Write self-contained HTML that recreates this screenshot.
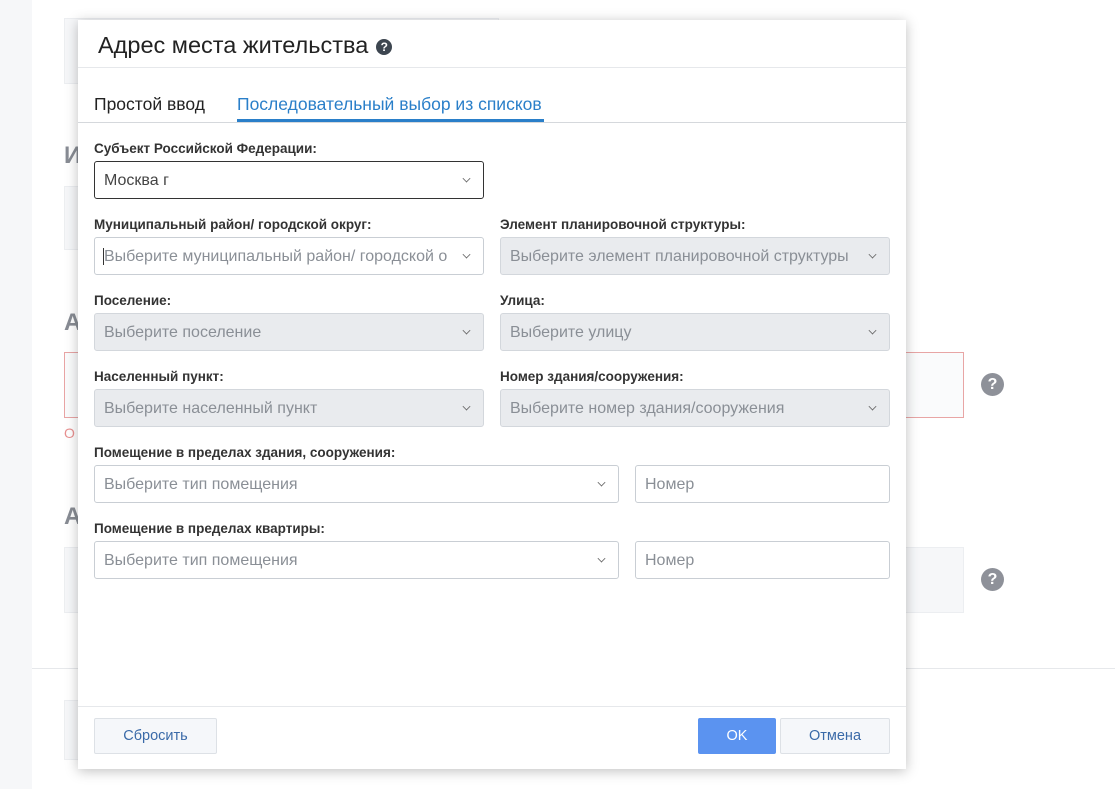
<!DOCTYPE html>
<html><head><meta charset="utf-8">
<style>
*{box-sizing:border-box;margin:0;padding:0}
body{width:1115px;height:789px;overflow:hidden;background:#fff;font-family:"Liberation Sans","DejaVu Sans",sans-serif;position:relative;color:#333}
.abs{position:absolute}
.strip{left:0;top:0;width:32px;height:789px;background:#f6f7f9}
.bgbox{background:#f6f7f9;border:1px solid #eceef1}
.bgh{font-size:24px;font-weight:bold;color:#888c94}
.q{width:23px;height:23px;border-radius:50%;background:#8e9199;color:#fff;font-weight:bold;font-size:16px;text-align:center;line-height:23px}
.modal{left:78px;top:20px;width:828px;height:749px;background:#fff;box-shadow:0 2px 12px rgba(0,0,0,.25)}
.title{left:20px;top:12px;font-size:23.5px;color:#222}
.ti{display:inline-block;width:16px;height:16px;border-radius:50%;background:#3d4650;color:#fff;font-size:12px;font-weight:bold;text-align:center;line-height:16px;vertical-align:2px;margin-left:8px}
.hline{left:0;width:828px;height:1px;background:#e6e8eb}
.tab{font-size:17.5px;top:73px}
.lbl{font-size:13.5px;font-weight:bold;color:#333}
.f{height:38px;border:1px solid #c9ced4;border-radius:3px;font-size:16px;color:#8a8f96;padding:0 0 0 9px;line-height:38px;background:#fff}
.f.d{background:#e9ebee;border-color:#d3d7dc}
.f .ch{position:absolute;right:13px;top:13px;width:7px;height:7px;border-right:1.3px solid #666;border-bottom:1.3px solid #666;transform:rotate(45deg) scale(.8)}
.btn{height:36px;border:1px solid #dde1e6;background:#f5f7fa;color:#3a6aa8;font-size:14.5px;text-align:center;line-height:35px;border-radius:2px}
</style></head><body>
<div class="abs strip"></div>
<div class="abs bgbox" style="left:64px;top:18px;width:435px;height:66px"></div>
<div class="abs bgh" style="left:64px;top:142px">И</div>
<div class="abs bgbox" style="left:64px;top:186px;width:435px;height:64px"></div>
<div class="abs bgh" style="left:64px;top:309px">А</div>
<div class="abs" style="left:64px;top:352px;width:900px;height:66px;border:1px solid #e8a5a5;background:#fafbfc"></div>
<div class="abs" style="left:64px;top:425px;color:#e89090;font-size:14px">О</div>
<div class="abs bgh" style="left:64px;top:503px">А</div>
<div class="abs bgbox" style="left:64px;top:547px;width:900px;height:66px"></div>
<div class="abs q" style="left:981px;top:373px">?</div>
<div class="abs q" style="left:981px;top:568px">?</div>
<div class="abs" style="left:32px;top:668px;width:1083px;height:1px;background:#e6e8eb"></div>
<div class="abs bgbox" style="left:64px;top:700px;width:200px;height:60px"></div>

<div class="abs modal">
 <div class="abs title">Адрес места жительства<span class="ti">?</span></div>
 <div class="abs hline" style="top:47px"></div>
 <div class="abs tab" style="left:16px;color:#222;top:74px">Простой ввод</div>
 <div class="abs tab" style="left:159px;color:#2a7fc9;top:74px">Последовательный выбор из списков</div>
 <div class="abs" style="left:159px;top:99px;width:307px;height:3px;background:#2a7fc9"></div>
 <div class="abs hline" style="top:102px;background:#d5d8dc"></div>

 <div class="abs lbl" style="left:16px;top:121px">Субъект Российской Федерации:</div>
 <div class="abs f" style="left:16px;top:141px;width:390px;border-color:#333;color:#444">Москва г<span class="ch"></span></div>

 <div class="abs lbl" style="left:16px;top:197px">Муниципальный район/ городской округ:</div>
 <div class="abs f" style="left:16px;top:217px;width:390px"><span style="border-left:1px solid #333;margin-left:-1px"></span>Выберите муниципальный район/ городской о<span class="ch"></span></div>
 <div class="abs lbl" style="left:422px;top:197px">Элемент планировочной структуры:</div>
 <div class="abs f d" style="left:422px;top:217px;width:390px">Выберите элемент планировочной структуры<span class="ch"></span></div>

 <div class="abs lbl" style="left:16px;top:273px">Поселение:</div>
 <div class="abs f d" style="left:16px;top:293px;width:390px">Выберите поселение<span class="ch"></span></div>
 <div class="abs lbl" style="left:422px;top:273px">Улица:</div>
 <div class="abs f d" style="left:422px;top:293px;width:390px">Выберите улицу<span class="ch"></span></div>

 <div class="abs lbl" style="left:16px;top:349px">Населенный пункт:</div>
 <div class="abs f d" style="left:16px;top:369px;width:390px">Выберите населенный пункт<span class="ch"></span></div>
 <div class="abs lbl" style="left:422px;top:349px">Номер здания/сооружения:</div>
 <div class="abs f d" style="left:422px;top:369px;width:390px">Выберите номер здания/сооружения<span class="ch"></span></div>

 <div class="abs lbl" style="left:16px;top:425px">Помещение в пределах здания, сооружения:</div>
 <div class="abs f" style="left:16px;top:445px;width:525px">Выберите тип помещения<span class="ch"></span></div>
 <div class="abs f" style="left:557px;top:445px;width:255px">Номер</div>

 <div class="abs lbl" style="left:16px;top:501px">Помещение в пределах квартиры:</div>
 <div class="abs f" style="left:16px;top:521px;width:525px">Выберите тип помещения<span class="ch"></span></div>
 <div class="abs f" style="left:557px;top:521px;width:255px">Номер</div>

 <div class="abs hline" style="top:686px"></div>
 <div class="abs btn" style="left:16px;top:698px;width:123px">Сбросить</div>
 <div class="abs btn" style="left:620px;top:698px;width:78px;background:#5b93f0;border-color:#5b93f0;color:#fff">OK</div>
 <div class="abs btn" style="left:702px;top:698px;width:110px">Отмена</div>
</div>
</body></html>
